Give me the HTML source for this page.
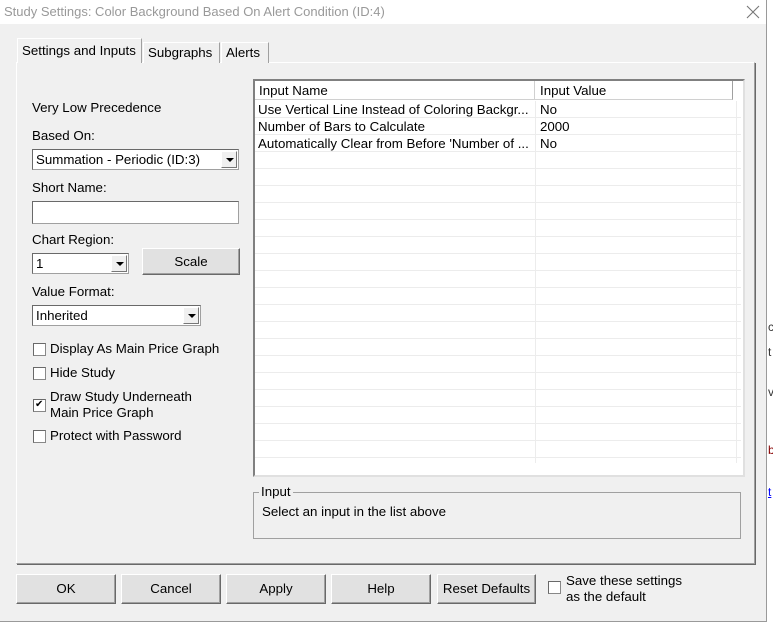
<!DOCTYPE html>
<html><head><style>
*{margin:0;padding:0;box-sizing:border-box}
body{width:773px;height:624px;background:#fff;font-family:"Liberation Sans",sans-serif;font-size:13.3px;color:#000;position:relative;overflow:hidden}
.a{position:absolute;white-space:nowrap}
.win{position:absolute;left:0;top:0;width:767px;height:622px;background:#f0f0f0;border-right:1px solid #9a9a9a;border-bottom:1px solid #9a9a9a}
.title{position:absolute;left:0;top:0;width:766px;height:24px;background:#fff;color:#999;font-size:13px;padding:4px 0 0 4px}
.panel{position:absolute;left:16px;top:62px;width:739px;height:502px;border:1px solid #fff;border-right-color:#a0a0a0;border-bottom-color:#a0a0a0;box-shadow:1px 1px 0 #696969}
.tab{position:absolute;top:42px;height:21px;border:1px solid #fff;border-right-color:#a0a0a0;border-bottom:none;background:#f0f0f0;padding:2px 4px 0 4px}
.combo{position:absolute;background:#fff;border:1px solid #a0a0a0;border-top-color:#696969;border-left-color:#696969;height:21px;padding:2px 0 0 3px}
.arr{position:absolute;right:1px;top:1px;width:16px;height:17px;background:#f0f0f0;border:1px solid #fff;border-right-color:#777;border-bottom-color:#777}
.arr:after{content:"";position:absolute;left:4px;top:6px;border-left:4px solid transparent;border-right:4px solid transparent;border-top:4px solid #000}
.btn{position:absolute;background:#e1e1e1;border:1px solid #fff;border-right-color:#696969;border-bottom-color:#696969;box-shadow:inset -1px -1px 0 #a0a0a0;text-align:center;padding-top:6px}
.cb{position:absolute;width:13px;height:13px;background:#fff;border:1px solid #888;border-top-color:#696969;border-left-color:#696969}
.list{position:absolute;left:253px;top:79px;width:492px;height:398px;background:#fff;border:2px solid #808080;border-right-color:#e0e0e0;border-bottom-color:#e0e0e0}
.row{position:absolute;left:0;width:486px;height:17px;border-bottom:1px solid #ececec}
</style></head><body>
<div class="win">
<div class="title">Study Settings: Color Background Based On Alert Condition (ID:4)</div>
<svg class="a" style="left:746px;top:5px" width="14" height="14"><path d="M1 1L13 13M13 1L1 13" stroke="#777" stroke-width="1.1"/></svg>
<div class="panel"></div>
<div class="tab" style="left:17px;top:38px;width:125px;height:25px;padding-top:4px;border-bottom:none;z-index:2">Settings and Inputs</div>
<div class="tab" style="left:143px;width:77px">Subgraphs</div>
<div class="tab" style="left:221px;width:48px">Alerts</div>

<div class="a" style="left:32px;top:100px">Very Low Precedence</div>
<div class="a" style="left:32px;top:128px">Based On:</div>
<div class="combo" style="left:32px;top:149px;width:207px">Summation - Periodic (ID:3)<div class="arr"></div></div>
<div class="a" style="left:32px;top:180px">Short Name:</div>
<div class="combo" style="left:32px;top:201px;width:207px;height:23px"></div>
<div class="a" style="left:32px;top:232px">Chart Region:</div>
<div class="combo" style="left:32px;top:253px;width:97px">1<div class="arr"></div></div>
<div class="btn" style="left:142px;top:248px;width:98px;height:27px;padding-top:5px">Scale</div>
<div class="a" style="left:32px;top:284px">Value Format:</div>
<div class="combo" style="left:32px;top:305px;width:169px">Inherited<div class="arr"></div></div>
<div class="cb" style="left:33px;top:343px"></div><div class="a" style="left:50px;top:341px">Display As Main Price Graph</div>
<div class="cb" style="left:33px;top:367px"></div><div class="a" style="left:50px;top:365px">Hide Study</div>
<div class="cb" style="left:33px;top:399px;font-size:10px;line-height:10px;padding-left:1px">✔</div><div class="a" style="left:50px;top:389px;line-height:16px">Draw Study Underneath<br>Main Price Graph</div>
<div class="cb" style="left:33px;top:430px"></div><div class="a" style="left:50px;top:428px">Protect with Password</div>

<div class="list">
<div class="a" style="left:0;top:0;width:280px;height:19px;background:#fff;border-right:1px solid #d0d0d0;border-bottom:1px solid #d0d0d0;padding:2px 0 0 4px">Input Name</div>
<div class="a" style="left:280px;top:0;width:198px;height:19px;border-right:1px solid #a0a0a0;border-bottom:1px solid #d0d0d0;padding:2px 0 0 5px">Input Value</div>
<div class="a" style="left:280px;top:20px;width:1px;height:362px;background:#ececec"></div>
<div class="a" style="left:481px;top:20px;width:1px;height:362px;background:#ececec"></div>
<div class="row" style="top:20px"><span class="a" style="left:3px;top:1px">Use Vertical Line Instead of Coloring Backgr...</span><span class="a" style="left:285px;top:1px">No</span></div>
<div class="row" style="top:37px"><span class="a" style="left:3px;top:1px">Number of Bars to Calculate</span><span class="a" style="left:285px;top:1px">2000</span></div>
<div class="row" style="top:54px"><span class="a" style="left:3px;top:1px">Automatically Clear from Before 'Number of ...</span><span class="a" style="left:285px;top:1px">No</span></div>
<div class="row" style="top:71px"></div><div class="row" style="top:88px"></div><div class="row" style="top:105px"></div><div class="row" style="top:122px"></div><div class="row" style="top:139px"></div><div class="row" style="top:156px"></div><div class="row" style="top:173px"></div><div class="row" style="top:190px"></div><div class="row" style="top:207px"></div><div class="row" style="top:224px"></div><div class="row" style="top:241px"></div><div class="row" style="top:258px"></div><div class="row" style="top:275px"></div><div class="row" style="top:292px"></div><div class="row" style="top:309px"></div><div class="row" style="top:326px"></div><div class="row" style="top:343px"></div><div class="row" style="top:360px"></div>
</div>

<div class="a" style="left:253px;top:492px;width:488px;height:47px;border:1px solid #a0a0a0"></div>
<div class="a" style="left:259px;top:484px;background:#f0f0f0;padding:0 2px">Input</div>
<div class="a" style="left:262px;top:504px">Select an input in the list above</div>

<div class="btn" style="left:16px;top:574px;width:100px;height:30px">OK</div>
<div class="btn" style="left:121px;top:574px;width:100px;height:30px">Cancel</div>
<div class="btn" style="left:226px;top:574px;width:100px;height:30px">Apply</div>
<div class="btn" style="left:331px;top:574px;width:100px;height:30px">Help</div>
<div class="btn" style="left:437px;top:574px;width:99px;height:30px">Reset Defaults</div>
<div class="cb" style="left:548px;top:581px"></div>
<div class="a" style="left:566px;top:573px;line-height:16px">Save these settings<br>as the default</div>
</div>
<div class="a" style="left:768px;top:320px;font-size:12px;color:#333">c</div>
<div class="a" style="left:768px;top:345px;font-size:12px;color:#333">t</div>
<div class="a" style="left:768px;top:385px;font-size:12px;color:#333">v</div>
<div class="a" style="left:768px;top:443px;font-size:12px;color:#800">b</div>
<div class="a" style="left:768px;top:485px;font-size:12px;color:#00f;text-decoration:underline">t</div>
</body></html>
